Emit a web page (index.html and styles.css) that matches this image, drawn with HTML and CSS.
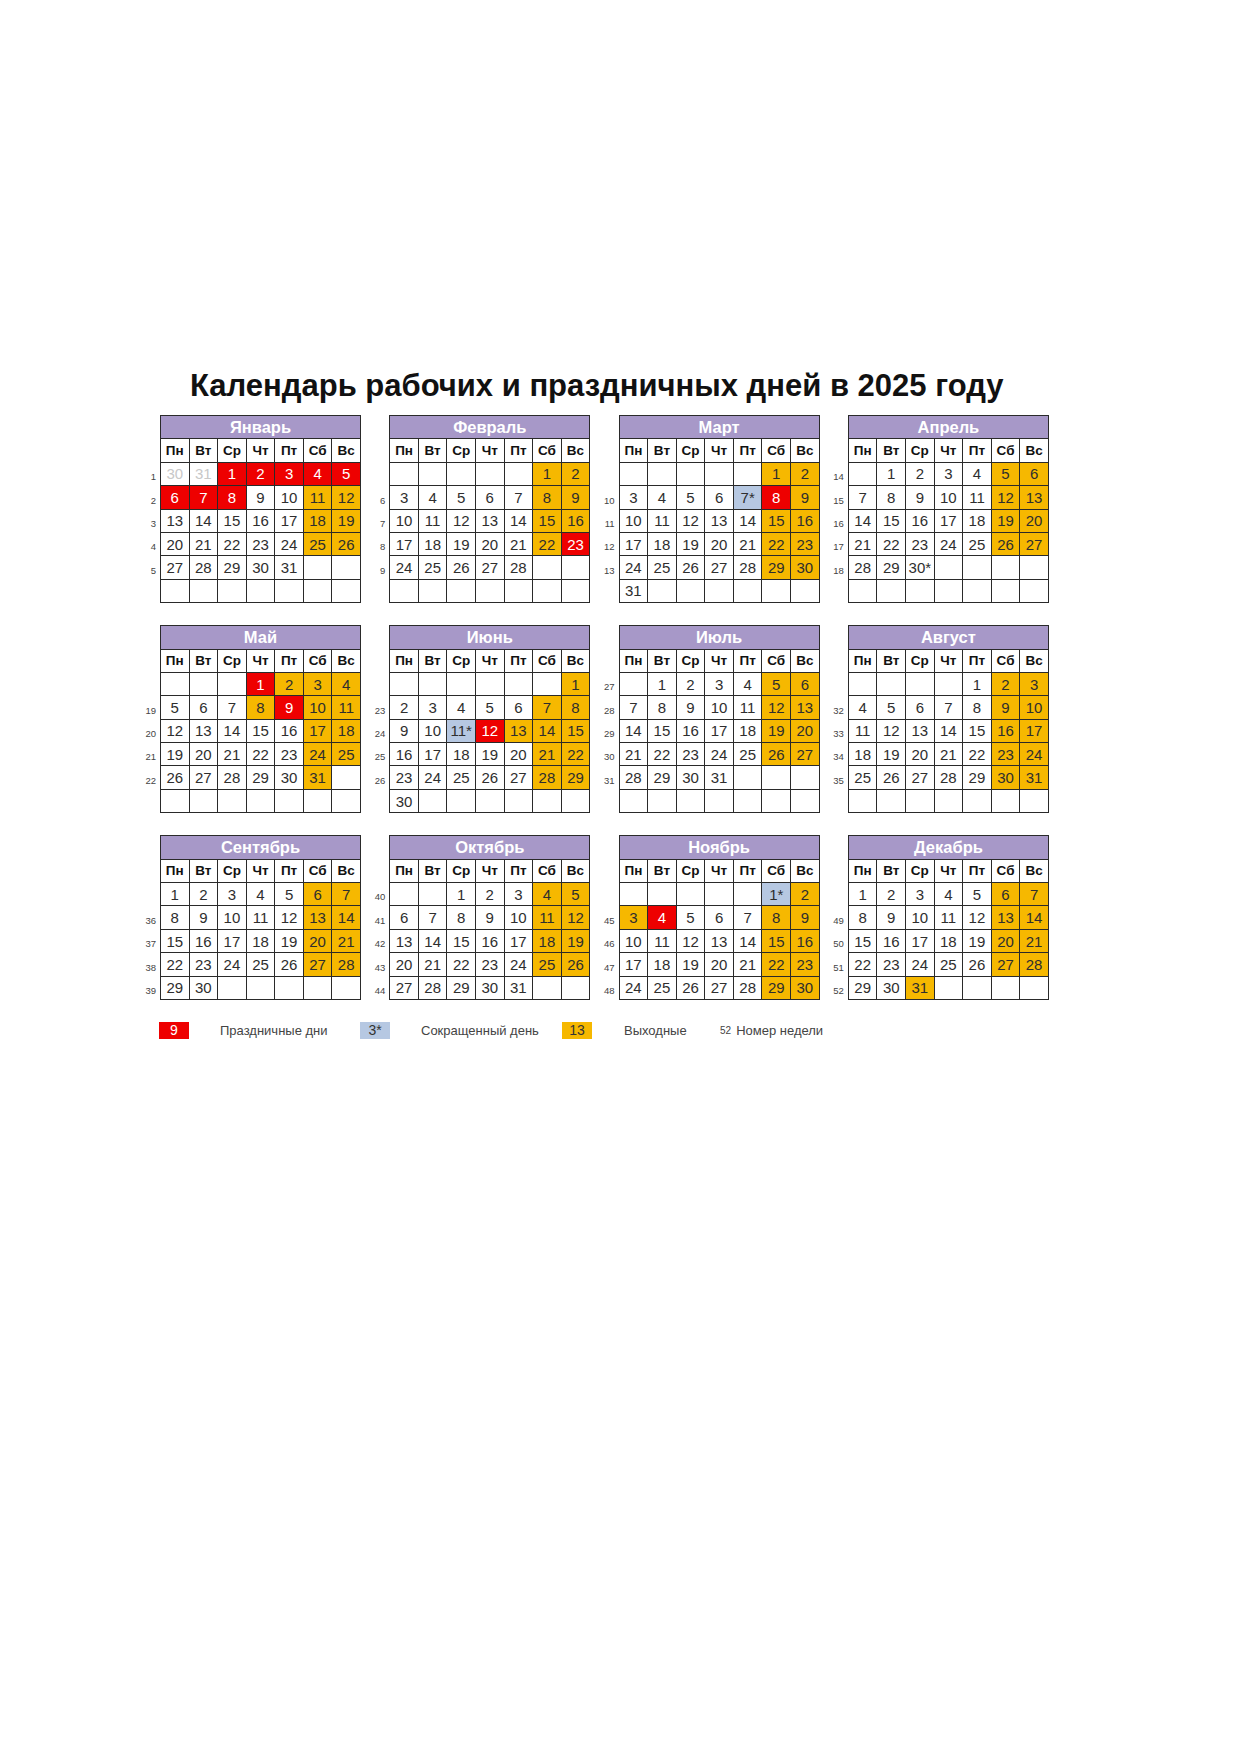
FILE: index.html
```html
<!DOCTYPE html>
<html lang="ru">
<head>
<meta charset="utf-8">
<title>Календарь 2025</title>
<link rel="stylesheet" href="styles.css">
</head>
<body>
<div class="page">
  <h1 class="title">Календарь рабочих и праздничных дней в 2025 году</h1>
  <div class="months">

    <!-- Январь -->
    <div class="month">
      <div class="weeks"><span></span><span></span><span>1</span><span>2</span><span>3</span><span>4</span><span>5</span><span></span></div>
      <div class="cal">
        <div class="mname">Январь</div>
        <div class="dn">Пн</div><div class="dn">Вт</div><div class="dn">Ср</div><div class="dn">Чт</div><div class="dn">Пт</div><div class="dn">Сб</div><div class="dn">Вс</div>
        <div class="d prev">30</div><div class="d prev">31</div><div class="d h">1</div><div class="d h">2</div><div class="d h">3</div><div class="d h">4</div><div class="d h">5</div>
        <div class="d h">6</div><div class="d h">7</div><div class="d h">8</div><div class="d">9</div><div class="d">10</div><div class="d w">11</div><div class="d w">12</div>
        <div class="d">13</div><div class="d">14</div><div class="d">15</div><div class="d">16</div><div class="d">17</div><div class="d w">18</div><div class="d w">19</div>
        <div class="d">20</div><div class="d">21</div><div class="d">22</div><div class="d">23</div><div class="d">24</div><div class="d w">25</div><div class="d w">26</div>
        <div class="d">27</div><div class="d">28</div><div class="d">29</div><div class="d">30</div><div class="d">31</div><div class="d"></div><div class="d"></div>
        <div class="d"></div><div class="d"></div><div class="d"></div><div class="d"></div><div class="d"></div><div class="d"></div><div class="d"></div>
      </div>
    </div>

    <!-- Февраль -->
    <div class="month">
      <div class="weeks"><span></span><span></span><span></span><span>6</span><span>7</span><span>8</span><span>9</span><span></span></div>
      <div class="cal">
        <div class="mname">Февраль</div>
        <div class="dn">Пн</div><div class="dn">Вт</div><div class="dn">Ср</div><div class="dn">Чт</div><div class="dn">Пт</div><div class="dn">Сб</div><div class="dn">Вс</div>
        <div class="d"></div><div class="d"></div><div class="d"></div><div class="d"></div><div class="d"></div><div class="d w">1</div><div class="d w">2</div>
        <div class="d">3</div><div class="d">4</div><div class="d">5</div><div class="d">6</div><div class="d">7</div><div class="d w">8</div><div class="d w">9</div>
        <div class="d">10</div><div class="d">11</div><div class="d">12</div><div class="d">13</div><div class="d">14</div><div class="d w">15</div><div class="d w">16</div>
        <div class="d">17</div><div class="d">18</div><div class="d">19</div><div class="d">20</div><div class="d">21</div><div class="d w">22</div><div class="d h">23</div>
        <div class="d">24</div><div class="d">25</div><div class="d">26</div><div class="d">27</div><div class="d">28</div><div class="d"></div><div class="d"></div>
        <div class="d"></div><div class="d"></div><div class="d"></div><div class="d"></div><div class="d"></div><div class="d"></div><div class="d"></div>
      </div>
    </div>

    <!-- Март -->
    <div class="month">
      <div class="weeks"><span></span><span></span><span></span><span>10</span><span>11</span><span>12</span><span>13</span><span></span></div>
      <div class="cal">
        <div class="mname">Март</div>
        <div class="dn">Пн</div><div class="dn">Вт</div><div class="dn">Ср</div><div class="dn">Чт</div><div class="dn">Пт</div><div class="dn">Сб</div><div class="dn">Вс</div>
        <div class="d"></div><div class="d"></div><div class="d"></div><div class="d"></div><div class="d"></div><div class="d w">1</div><div class="d w">2</div>
        <div class="d">3</div><div class="d">4</div><div class="d">5</div><div class="d">6</div><div class="d s">7*</div><div class="d h">8</div><div class="d w">9</div>
        <div class="d">10</div><div class="d">11</div><div class="d">12</div><div class="d">13</div><div class="d">14</div><div class="d w">15</div><div class="d w">16</div>
        <div class="d">17</div><div class="d">18</div><div class="d">19</div><div class="d">20</div><div class="d">21</div><div class="d w">22</div><div class="d w">23</div>
        <div class="d">24</div><div class="d">25</div><div class="d">26</div><div class="d">27</div><div class="d">28</div><div class="d w">29</div><div class="d w">30</div>
        <div class="d">31</div><div class="d"></div><div class="d"></div><div class="d"></div><div class="d"></div><div class="d"></div><div class="d"></div>
      </div>
    </div>

    <!-- Апрель -->
    <div class="month">
      <div class="weeks"><span></span><span></span><span>14</span><span>15</span><span>16</span><span>17</span><span>18</span><span></span></div>
      <div class="cal">
        <div class="mname">Апрель</div>
        <div class="dn">Пн</div><div class="dn">Вт</div><div class="dn">Ср</div><div class="dn">Чт</div><div class="dn">Пт</div><div class="dn">Сб</div><div class="dn">Вс</div>
        <div class="d"></div><div class="d">1</div><div class="d">2</div><div class="d">3</div><div class="d">4</div><div class="d w">5</div><div class="d w">6</div>
        <div class="d">7</div><div class="d">8</div><div class="d">9</div><div class="d">10</div><div class="d">11</div><div class="d w">12</div><div class="d w">13</div>
        <div class="d">14</div><div class="d">15</div><div class="d">16</div><div class="d">17</div><div class="d">18</div><div class="d w">19</div><div class="d w">20</div>
        <div class="d">21</div><div class="d">22</div><div class="d">23</div><div class="d">24</div><div class="d">25</div><div class="d w">26</div><div class="d w">27</div>
        <div class="d">28</div><div class="d">29</div><div class="d">30*</div><div class="d"></div><div class="d"></div><div class="d"></div><div class="d"></div>
        <div class="d"></div><div class="d"></div><div class="d"></div><div class="d"></div><div class="d"></div><div class="d"></div><div class="d"></div>
      </div>
    </div>

    <!-- Май -->
    <div class="month">
      <div class="weeks"><span></span><span></span><span></span><span>19</span><span>20</span><span>21</span><span>22</span><span></span></div>
      <div class="cal">
        <div class="mname">Май</div>
        <div class="dn">Пн</div><div class="dn">Вт</div><div class="dn">Ср</div><div class="dn">Чт</div><div class="dn">Пт</div><div class="dn">Сб</div><div class="dn">Вс</div>
        <div class="d"></div><div class="d"></div><div class="d"></div><div class="d h">1</div><div class="d w">2</div><div class="d w">3</div><div class="d w">4</div>
        <div class="d">5</div><div class="d">6</div><div class="d">7</div><div class="d w">8</div><div class="d h">9</div><div class="d w">10</div><div class="d w">11</div>
        <div class="d">12</div><div class="d">13</div><div class="d">14</div><div class="d">15</div><div class="d">16</div><div class="d w">17</div><div class="d w">18</div>
        <div class="d">19</div><div class="d">20</div><div class="d">21</div><div class="d">22</div><div class="d">23</div><div class="d w">24</div><div class="d w">25</div>
        <div class="d">26</div><div class="d">27</div><div class="d">28</div><div class="d">29</div><div class="d">30</div><div class="d w">31</div><div class="d"></div>
        <div class="d"></div><div class="d"></div><div class="d"></div><div class="d"></div><div class="d"></div><div class="d"></div><div class="d"></div>
      </div>
    </div>

    <!-- Июнь -->
    <div class="month">
      <div class="weeks"><span></span><span></span><span></span><span>23</span><span>24</span><span>25</span><span>26</span><span></span></div>
      <div class="cal">
        <div class="mname">Июнь</div>
        <div class="dn">Пн</div><div class="dn">Вт</div><div class="dn">Ср</div><div class="dn">Чт</div><div class="dn">Пт</div><div class="dn">Сб</div><div class="dn">Вс</div>
        <div class="d"></div><div class="d"></div><div class="d"></div><div class="d"></div><div class="d"></div><div class="d"></div><div class="d w">1</div>
        <div class="d">2</div><div class="d">3</div><div class="d">4</div><div class="d">5</div><div class="d">6</div><div class="d w">7</div><div class="d w">8</div>
        <div class="d">9</div><div class="d">10</div><div class="d s">11*</div><div class="d h">12</div><div class="d w">13</div><div class="d w">14</div><div class="d w">15</div>
        <div class="d">16</div><div class="d">17</div><div class="d">18</div><div class="d">19</div><div class="d">20</div><div class="d w">21</div><div class="d w">22</div>
        <div class="d">23</div><div class="d">24</div><div class="d">25</div><div class="d">26</div><div class="d">27</div><div class="d w">28</div><div class="d w">29</div>
        <div class="d">30</div><div class="d"></div><div class="d"></div><div class="d"></div><div class="d"></div><div class="d"></div><div class="d"></div>
      </div>
    </div>

    <!-- Июль -->
    <div class="month">
      <div class="weeks"><span></span><span></span><span>27</span><span>28</span><span>29</span><span>30</span><span>31</span><span></span></div>
      <div class="cal">
        <div class="mname">Июль</div>
        <div class="dn">Пн</div><div class="dn">Вт</div><div class="dn">Ср</div><div class="dn">Чт</div><div class="dn">Пт</div><div class="dn">Сб</div><div class="dn">Вс</div>
        <div class="d"></div><div class="d">1</div><div class="d">2</div><div class="d">3</div><div class="d">4</div><div class="d w">5</div><div class="d w">6</div>
        <div class="d">7</div><div class="d">8</div><div class="d">9</div><div class="d">10</div><div class="d">11</div><div class="d w">12</div><div class="d w">13</div>
        <div class="d">14</div><div class="d">15</div><div class="d">16</div><div class="d">17</div><div class="d">18</div><div class="d w">19</div><div class="d w">20</div>
        <div class="d">21</div><div class="d">22</div><div class="d">23</div><div class="d">24</div><div class="d">25</div><div class="d w">26</div><div class="d w">27</div>
        <div class="d">28</div><div class="d">29</div><div class="d">30</div><div class="d">31</div><div class="d"></div><div class="d"></div><div class="d"></div>
        <div class="d"></div><div class="d"></div><div class="d"></div><div class="d"></div><div class="d"></div><div class="d"></div><div class="d"></div>
      </div>
    </div>

    <!-- Август -->
    <div class="month">
      <div class="weeks"><span></span><span></span><span></span><span>32</span><span>33</span><span>34</span><span>35</span><span></span></div>
      <div class="cal">
        <div class="mname">Август</div>
        <div class="dn">Пн</div><div class="dn">Вт</div><div class="dn">Ср</div><div class="dn">Чт</div><div class="dn">Пт</div><div class="dn">Сб</div><div class="dn">Вс</div>
        <div class="d"></div><div class="d"></div><div class="d"></div><div class="d"></div><div class="d">1</div><div class="d w">2</div><div class="d w">3</div>
        <div class="d">4</div><div class="d">5</div><div class="d">6</div><div class="d">7</div><div class="d">8</div><div class="d w">9</div><div class="d w">10</div>
        <div class="d">11</div><div class="d">12</div><div class="d">13</div><div class="d">14</div><div class="d">15</div><div class="d w">16</div><div class="d w">17</div>
        <div class="d">18</div><div class="d">19</div><div class="d">20</div><div class="d">21</div><div class="d">22</div><div class="d w">23</div><div class="d w">24</div>
        <div class="d">25</div><div class="d">26</div><div class="d">27</div><div class="d">28</div><div class="d">29</div><div class="d w">30</div><div class="d w">31</div>
        <div class="d"></div><div class="d"></div><div class="d"></div><div class="d"></div><div class="d"></div><div class="d"></div><div class="d"></div>
      </div>
    </div>

    <!-- Сентябрь -->
    <div class="month">
      <div class="weeks"><span></span><span></span><span></span><span>36</span><span>37</span><span>38</span><span>39</span></div>
      <div class="cal">
        <div class="mname">Сентябрь</div>
        <div class="dn">Пн</div><div class="dn">Вт</div><div class="dn">Ср</div><div class="dn">Чт</div><div class="dn">Пт</div><div class="dn">Сб</div><div class="dn">Вс</div>
        <div class="d">1</div><div class="d">2</div><div class="d">3</div><div class="d">4</div><div class="d">5</div><div class="d w">6</div><div class="d w">7</div>
        <div class="d">8</div><div class="d">9</div><div class="d">10</div><div class="d">11</div><div class="d">12</div><div class="d w">13</div><div class="d w">14</div>
        <div class="d">15</div><div class="d">16</div><div class="d">17</div><div class="d">18</div><div class="d">19</div><div class="d w">20</div><div class="d w">21</div>
        <div class="d">22</div><div class="d">23</div><div class="d">24</div><div class="d">25</div><div class="d">26</div><div class="d w">27</div><div class="d w">28</div>
        <div class="d">29</div><div class="d">30</div><div class="d"></div><div class="d"></div><div class="d"></div><div class="d"></div><div class="d"></div>
      </div>
    </div>

    <!-- Октябрь -->
    <div class="month">
      <div class="weeks"><span></span><span></span><span>40</span><span>41</span><span>42</span><span>43</span><span>44</span></div>
      <div class="cal">
        <div class="mname">Октябрь</div>
        <div class="dn">Пн</div><div class="dn">Вт</div><div class="dn">Ср</div><div class="dn">Чт</div><div class="dn">Пт</div><div class="dn">Сб</div><div class="dn">Вс</div>
        <div class="d"></div><div class="d"></div><div class="d">1</div><div class="d">2</div><div class="d">3</div><div class="d w">4</div><div class="d w">5</div>
        <div class="d">6</div><div class="d">7</div><div class="d">8</div><div class="d">9</div><div class="d">10</div><div class="d w">11</div><div class="d w">12</div>
        <div class="d">13</div><div class="d">14</div><div class="d">15</div><div class="d">16</div><div class="d">17</div><div class="d w">18</div><div class="d w">19</div>
        <div class="d">20</div><div class="d">21</div><div class="d">22</div><div class="d">23</div><div class="d">24</div><div class="d w">25</div><div class="d w">26</div>
        <div class="d">27</div><div class="d">28</div><div class="d">29</div><div class="d">30</div><div class="d">31</div><div class="d"></div><div class="d"></div>
      </div>
    </div>

    <!-- Ноябрь -->
    <div class="month">
      <div class="weeks"><span></span><span></span><span></span><span>45</span><span>46</span><span>47</span><span>48</span></div>
      <div class="cal">
        <div class="mname">Ноябрь</div>
        <div class="dn">Пн</div><div class="dn">Вт</div><div class="dn">Ср</div><div class="dn">Чт</div><div class="dn">Пт</div><div class="dn">Сб</div><div class="dn">Вс</div>
        <div class="d"></div><div class="d"></div><div class="d"></div><div class="d"></div><div class="d"></div><div class="d s">1*</div><div class="d w">2</div>
        <div class="d w">3</div><div class="d h">4</div><div class="d">5</div><div class="d">6</div><div class="d">7</div><div class="d w">8</div><div class="d w">9</div>
        <div class="d">10</div><div class="d">11</div><div class="d">12</div><div class="d">13</div><div class="d">14</div><div class="d w">15</div><div class="d w">16</div>
        <div class="d">17</div><div class="d">18</div><div class="d">19</div><div class="d">20</div><div class="d">21</div><div class="d w">22</div><div class="d w">23</div>
        <div class="d">24</div><div class="d">25</div><div class="d">26</div><div class="d">27</div><div class="d">28</div><div class="d w">29</div><div class="d w">30</div>
      </div>
    </div>

    <!-- Декабрь -->
    <div class="month">
      <div class="weeks"><span></span><span></span><span></span><span>49</span><span>50</span><span>51</span><span>52</span></div>
      <div class="cal">
        <div class="mname">Декабрь</div>
        <div class="dn">Пн</div><div class="dn">Вт</div><div class="dn">Ср</div><div class="dn">Чт</div><div class="dn">Пт</div><div class="dn">Сб</div><div class="dn">Вс</div>
        <div class="d">1</div><div class="d">2</div><div class="d">3</div><div class="d">4</div><div class="d">5</div><div class="d w">6</div><div class="d w">7</div>
        <div class="d">8</div><div class="d">9</div><div class="d">10</div><div class="d">11</div><div class="d">12</div><div class="d w">13</div><div class="d w">14</div>
        <div class="d">15</div><div class="d">16</div><div class="d">17</div><div class="d">18</div><div class="d">19</div><div class="d w">20</div><div class="d w">21</div>
        <div class="d">22</div><div class="d">23</div><div class="d">24</div><div class="d">25</div><div class="d">26</div><div class="d w">27</div><div class="d w">28</div>
        <div class="d">29</div><div class="d">30</div><div class="d w">31</div><div class="d"></div><div class="d"></div><div class="d"></div><div class="d"></div>
      </div>
    </div>

  </div>

  <div class="legend">
    <span class="lbox h">9</span><span class="ltext t1">Праздничные дни</span>
    <span class="lbox s">3*</span><span class="ltext t2">Сокращенный день</span>
    <span class="lbox w">13</span><span class="ltext t3">Выходные</span>
    <span class="lweek">52</span><span class="ltext">Номер недели</span>
  </div>
</div>
</body>
</html>
```

FILE: styles.css
```css
html, body {
  margin: 0;
  padding: 0;
  background: #ffffff;
}

body {
  font-family: "Liberation Sans", Arial, sans-serif;
  color: #2b2b2b;
}

.page {
  width: 1240px;
  min-height: 1754px;
  padding: 369px 0 0 132px;
  box-sizing: border-box;
}

.title {
  margin: 0;
  padding-left: 58px;
  font-size: 31px;
  line-height: 34px;
  font-weight: bold;
  color: #111111;
  white-space: nowrap;
}

.months {
  margin-top: 12px;
  display: grid;
  grid-template-columns: repeat(4, 229.3px);
  row-gap: 22px;
  align-items: start;
}

.month {
  display: flex;
}

.weeks {
  width: 28px;
  display: flex;
  flex-direction: column;
  padding-top: 1px;
}

.weeks span {
  height: 23.4px;
  box-sizing: border-box;
  display: flex;
  align-items: flex-end;
  justify-content: flex-end;
  padding: 0 4px 4px 0;
  font-size: 9.5px;
  line-height: 10px;
  color: #444444;
}

.cal {
  width: 201px;
  display: grid;
  grid-template-columns: repeat(7, 1fr);
  grid-auto-rows: 23.4px;
  border-top: 1px solid #2a2a2a;
  border-left: 1px solid #2a2a2a;
  box-sizing: border-box;
}

.cal > div {
  border-right: 1px solid #2a2a2a;
  border-bottom: 1px solid #2a2a2a;
  display: flex;
  align-items: center;
  justify-content: center;
  overflow: hidden;
}

.mname {
  grid-column: 1 / span 7;
  background: #a798c8;
  color: #ffffff;
  font-weight: bold;
  font-size: 16.5px;
}

.dn {
  font-weight: bold;
  font-size: 13.5px;
  color: #111111;
}

.d {
  font-size: 15px;
  color: #2e2e2e;
}

.d.prev {
  color: #c8c8c8;
}

.h {
  background: #ee0000;
  color: #ffffff;
}

.d.h {
  color: #ffffff;
}

.w {
  background: #f6b800;
}

.s {
  background: #b6c8e2;
}

.legend {
  margin-top: 22px;
  display: flex;
  align-items: center;
  height: 17px;
  padding-left: 27px;
}

.lbox {
  width: 30px;
  height: 17px;
  display: flex;
  align-items: center;
  justify-content: center;
  font-size: 14px;
  color: #333333;
  margin-right: 31px;
}

.lbox.h {
  color: #ffffff;
}

.ltext {
  font-size: 13px;
  color: #444444;
}

.t1 {
  width: 140px;
}

.t2 {
  width: 141px;
}

.t3 {
  width: 96px;
  margin-left: 1px;
}

.lweek {
  font-size: 10px;
  color: #444444;
  margin-right: 5px;
}
```
